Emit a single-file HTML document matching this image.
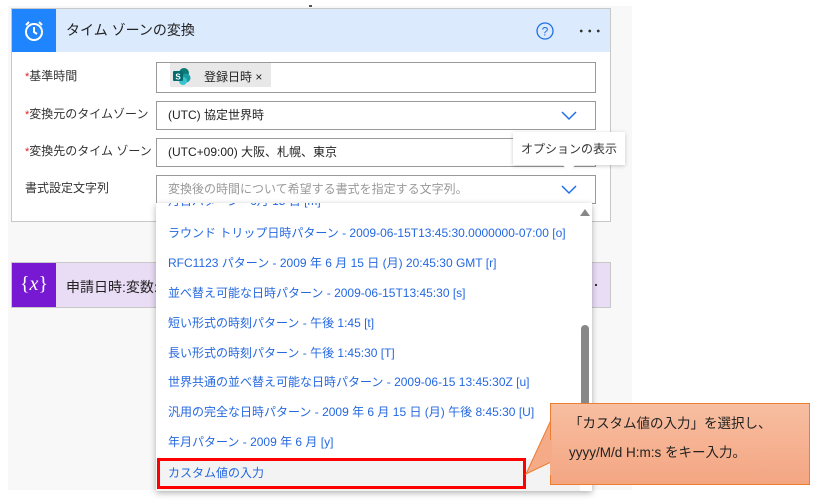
<!DOCTYPE html>
<html><head><meta charset="utf-8"><style>
*{box-sizing:border-box;margin:0;padding:0}
body{width:822px;height:504px;background:#fff;position:relative;overflow:hidden;font-family:"Liberation Sans","Noto Sans CJK JP",sans-serif;font-size:12px;color:#222}
.abs{position:absolute}
.bg{left:8px;top:6px;width:624px;height:484px;background:#f8f8f8}
.card{left:11px;top:8px;width:600px;height:214px;background:#fff;border:1px solid #c8c8c8}
.hdr{left:12px;top:9px;width:598px;height:43px;background:#dbeafd}
.ico{left:12px;top:9px;width:44px;height:43px;background:#1f85ff}
.title{left:66px;top:20px;font-size:14px;color:#222}
.lbl{left:25px;font-size:12px;color:#333}
.lbl b{color:#e02020;font-weight:normal;font-size:11px}
.inp{left:156px;width:440px;border:1px solid #999;background:#fff;font-size:12px;padding-left:11px;line-height:26px}
.chev{position:absolute;right:18px;top:9px}
.dd{left:156px;top:203px;width:436px;height:288px;background:#fff;box-shadow:0 2px 6px rgba(0,0,0,.3);overflow:hidden}
.it{position:absolute;left:12px;color:#2468e0;font-size:12px;white-space:nowrap}
.callout{left:550px;top:403px;width:260px;height:82px;background:linear-gradient(#f7bea1,#f4a682);border:1px solid #ed7d31;font-size:13.5px;color:#222;padding:5px 0 0 18px;line-height:29px}
</style></head><body>
<div class="abs bg"></div>
<div class="abs" style="left:309px;top:5px;width:3px;height:2px;background:#555"></div>
<div class="abs card"></div>
<div class="abs hdr"></div>
<div class="abs ico"><svg width="44" height="43" viewBox="0 0 44 43"><circle cx="22" cy="23" r="8" fill="none" stroke="#fff" stroke-width="2"/><path d="M22 18v5l3 2" fill="none" stroke="#fff" stroke-width="2"/><path d="M14 16l3-3M30 16l-3-3" stroke="#fff" stroke-width="2"/></svg></div>
<div class="abs title">タイム ゾーンの変換</div>
<svg class="abs" style="left:535px;top:21px" width="20" height="20"><circle cx="10" cy="10" r="8" fill="none" stroke="#1f70e8" stroke-width="1.3"/><text x="10" y="14.5" font-size="12" fill="#1f70e8" text-anchor="middle" font-family="Liberation Sans">?</text></svg>
<div class="abs" style="left:577px;top:29px;width:25px;height:4px;background:radial-gradient(circle,#333 1.2px,transparent 1.6px) 0 0/8.5px 4px"></div>

<div class="abs lbl" style="top:67px"><b>*</b>基準時間</div>
<div class="abs lbl" style="top:105px"><b>*</b>変換元のタイムゾーン</div>
<div class="abs lbl" style="top:142px"><b>*</b>変換先のタイム ゾーン</div>
<div class="abs lbl" style="top:179px">書式設定文字列</div>

<div class="abs inp" style="top:62px;height:31px"></div>
<div class="abs" style="left:170px;top:63px;width:101px;height:24px;background:#e8e8e8"></div>
<svg class="abs" style="left:172px;top:66px" width="20" height="20"><circle cx="12" cy="7" r="5" fill="#0b7a75"/><circle cx="14" cy="12" r="4.5" fill="#1a9ba1"/><circle cx="11" cy="15" r="4" fill="#37c6d0"/><rect x="1" y="5" width="10" height="10" rx="1" fill="#036c70"/><text x="6" y="13.5" font-size="8" fill="#fff" text-anchor="middle" font-weight="bold">S</text></svg>
<div class="abs" style="left:204px;top:68px;font-size:12px">登録日時 <span style="font-size:12px">×</span></div>

<div class="abs inp" style="top:101px;height:29px">(UTC) 協定世界時<svg class="chev" width="16" height="10"><path d="M1 1l7 7 7-7" fill="none" stroke="#1f70e8" stroke-width="1.5"/></svg></div>
<div class="abs inp" style="top:138px;height:29px">(UTC+09:00) 大阪、札幌、東京</div>
<div class="abs inp" style="top:175px;height:29px;color:#999">変換後の時間について希望する書式を指定する文字列。<svg class="chev" width="16" height="10"><path d="M1 1l7 7 7-7" fill="none" stroke="#1f70e8" stroke-width="1.5"/></svg></div>

<div class="abs" style="left:513px;top:132px;width:112px;height:33px;background:#fff;box-shadow:0 1px 4px rgba(0,0,0,.2);font-size:12px;color:#333;padding:8px 0 0 8px">オプションの表示</div>
<div class="abs" style="left:562px;top:164px;width:0;height:0;border-left:7px solid transparent;border-right:7px solid transparent;border-top:8px solid #fff"></div>

<div class="abs" style="left:11px;top:262px;width:600px;height:46px;background:#e9dcf5;border:1px solid #c8c8c8"></div>
<div class="abs" style="left:12px;top:263px;width:44px;height:44px;background:#7719d3;color:#fff;font-family:'Liberation Serif',serif;font-size:20px;text-align:center;line-height:42px">{<i>x</i>}</div>
<div class="abs" style="left:66px;top:277px;font-size:14px">申請日時:変数:</div>
<div class="abs" style="left:595px;top:284px;width:2px;height:2px;background:#333"></div>

<div class="abs dd">
<div class="it" style="top:-11px">月日パターン - 6月 15 日 [m]</div>
<div class="it" style="top:21px">ラウンド トリップ日時パターン - 2009-06-15T13:45:30.0000000-07:00 [o]</div>
<div class="it" style="top:51px">RFC1123 パターン - 2009 年 6 月 15 日 (月) 20:45:30 GMT [r]</div>
<div class="it" style="top:81px">並べ替え可能な日時パターン - 2009-06-15T13:45:30 [s]</div>
<div class="it" style="top:111px">短い形式の時刻パターン - 午後 1:45 [t]</div>
<div class="it" style="top:141px">長い形式の時刻パターン - 午後 1:45:30 [T]</div>
<div class="it" style="top:170px">世界共通の並べ替え可能な日時パターン - 2009-06-15 13:45:30Z [u]</div>
<div class="it" style="top:200px">汎用の完全な日時パターン - 2009 年 6 月 15 日 (月) 午後 8:45:30 [U]</div>
<div class="it" style="top:230px">年月パターン - 2009 年 6 月 [y]</div>
<div style="position:absolute;left:0;top:256px;width:424px;height:32px;background:#f3f3f3"></div>
<div class="it" style="top:261px">カスタム値の入力</div>
</div>
<div class="abs" style="left:157px;top:458px;width:369px;height:31px;border:3px solid #f00"></div>
<div class="abs" style="left:580px;top:209px;width:0;height:0;border-left:5px solid transparent;border-right:5px solid transparent;border-bottom:7px solid #888"></div>
<div class="abs" style="left:581px;top:325px;width:8px;height:150px;background:#888;border-radius:4px"></div>

<svg class="abs" style="left:520px;top:400px" width="300" height="95"><path d="M31 20 L6 74 L31 62" fill="#f5ab88" stroke="#ed7d31" stroke-width="1"/></svg>
<div class="abs callout">「カスタム値の入力」を選択し、<br>yyyy/M/d H:m:s をキー入力。</div>
<div class="abs" style="left:550px;top:440px;width:2px;height:35px;background:#f5ab88"></div>
</body></html>
